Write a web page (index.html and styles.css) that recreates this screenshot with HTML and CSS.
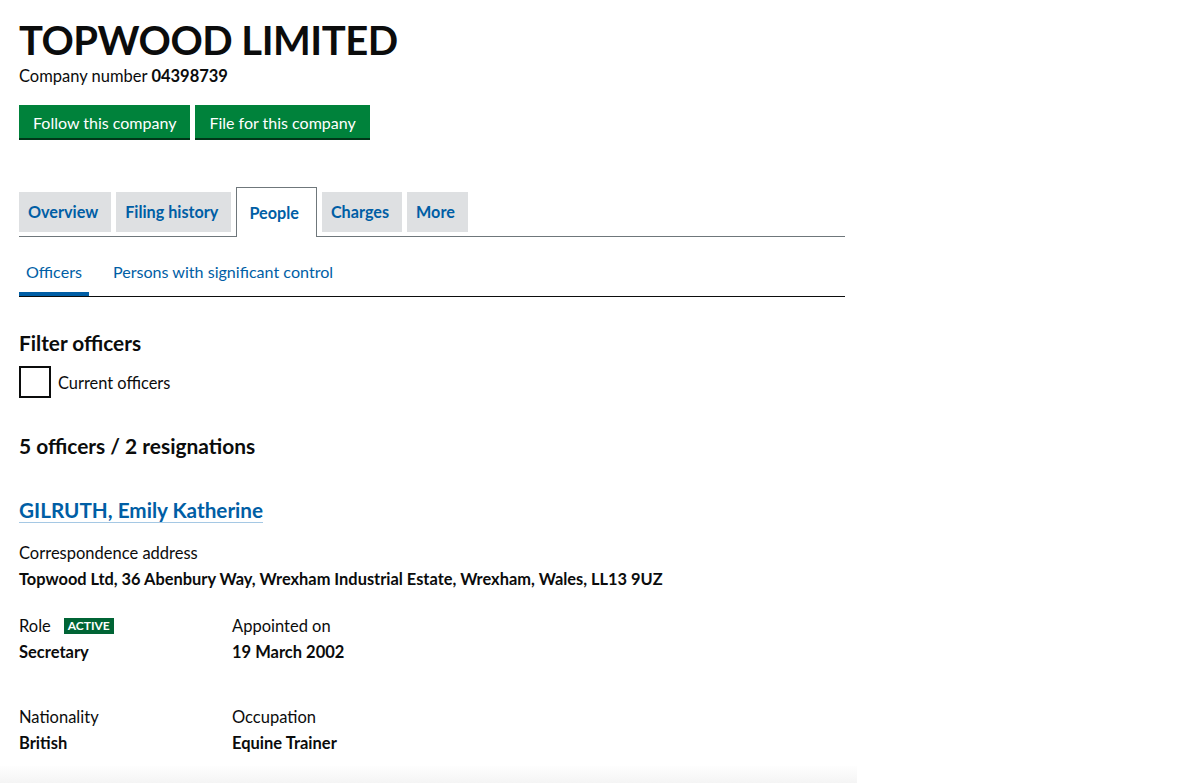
FILE: index.html
```html
<!DOCTYPE html>
<html lang="en">
<head>
<meta charset="utf-8">
<title>TOPWOOD LIMITED - People</title>
<link rel="stylesheet" href="styles.css">
</head>
<body>
<main class="page">
  <h1 class="title">TOPWOOD LIMITED</h1>
  <p class="company-number">Company number <strong>04398739</strong></p>
  <div class="actions">
    <a class="button" href="#">Follow this company</a>
    <a class="button" href="#">File for this company</a>
  </div>

  <nav class="tabs">
    <a class="tab" href="#">Overview</a>
    <a class="tab" href="#">Filing history</a>
    <a class="tab active" href="#">People</a>
    <a class="tab" href="#">Charges</a>
    <a class="tab" href="#">More</a>
  </nav>

  <nav class="subtabs">
    <a class="subtab active" href="#">Officers</a>
    <a class="subtab" href="#">Persons with significant control</a>
  </nav>

  <h2 class="filter-heading">Filter officers</h2>
  <label class="checkbox"><span class="box"></span><span>Current officers</span></label>

  <h2 class="count">5 officers / 2 resignations</h2>

  <section class="officer">
    <h2 class="officer-name"><a href="#">GILRUTH, Emily Katherine</a></h2>
    <div class="field">
      <div class="label">Correspondence address</div>
      <div class="value address">Topwood Ltd, 36 Abenbury Way, Wrexham Industrial Estate, Wrexham, Wales, LL13 9UZ</div>
    </div>
    <div class="row">
      <div class="field col">
        <div class="label">Role <span class="badge">ACTIVE</span></div>
        <div class="value">Secretary</div>
      </div>
      <div class="field col">
        <div class="label">Appointed on</div>
        <div class="value">19 March 2002</div>
      </div>
    </div>
    <div class="row second">
      <div class="field col">
        <div class="label">Nationality</div>
        <div class="value">British</div>
      </div>
      <div class="field col">
        <div class="label">Occupation</div>
        <div class="value">Equine Trainer</div>
      </div>
    </div>
  </section>
  <div class="fade"></div>
</main>
</body>
</html>
```

FILE: styles.css
```css
html, body {
  margin: 0;
  padding: 0;
  background: #fff;
}
body {
  font-family: "Lato", "Liberation Sans", sans-serif;
  color: #0b0c0c;
}
.page {
  width: 826px;
  padding: 0 0 0 19px;
}
.title {
  margin: 0;
  padding-top: 17px;
  font-size: 40px;
  line-height: 46px;
  font-weight: 700;
  letter-spacing: -0.5px;
}
.company-number {
  margin: 2px 0 0;
  font-size: 16.5px;
  line-height: 22px;
}
.company-number strong { font-weight: 700; }
.actions {
  display: flex;
  gap: 5px;
  margin-top: 18px;
}
.button {
  display: block;
  background: #00823b;
  color: #fff;
  text-decoration: none;
  font-size: 16px;
  line-height: 20px;
  padding: 8px 14px 5px;
  border-bottom: 2px solid #003618;
}
.tabs {
  display: flex;
  align-items: flex-end;
  gap: 5px;
  margin-top: 47px;
  border-bottom: 1px solid #6f777b;
  height: 49px;
}
.tab {
  display: block;
  background: #dee0e2;
  color: #005ea5;
  font-weight: 700;
  font-size: 16.2px;
  text-decoration: none;
  line-height: 20px;
  padding: 10px 13px 10px 9px;
  margin-bottom: 4px;
}
.tab.active {
  background: #fff;
  border: 1px solid #6f777b;
  border-bottom: 0;
  padding: 15px 17px 14px 12px;
  margin-bottom: -1px;
}
.subtabs {
  display: flex;
  gap: 17px;
  border-bottom: 1px solid #0b0c0c;
  height: 59px;
  align-items: stretch;
}
.subtab {
  color: #005ea5;
  text-decoration: none;
  font-size: 16.1px;
  padding: 25px 7px 0;
  box-sizing: border-box;
}
.subtab.active {
  border-bottom: 4px solid #005ea5;
}
.filter-heading {
  margin: 33px 0 0;
  font-size: 20.8px;
  line-height: 26px;
  font-weight: 700;
}
.checkbox {
  display: flex;
  align-items: center;
  gap: 7px;
  margin-top: 10px;
  font-size: 16.4px;
}
.box {
  width: 28px;
  height: 28px;
  border: 2px solid #0b0c0c;
  display: block;
}
.count {
  margin: 35px 0 0;
  font-size: 20.9px;
  line-height: 26px;
  font-weight: 700;
}
.officer-name {
  margin: 38px 0 0;
  font-size: 20.7px;
  line-height: 26px;
  font-weight: 700;
}
.officer-name a {
  color: #005ea5;
  text-decoration: none;
  border-bottom: 1px solid #a5c8e4;
}
.field {
  font-size: 16.5px;
  line-height: 26px;
}
.value.address { font-size: 16.4px; }
.officer > .field { margin-top: 17px; }
.label { display: flex; align-items: center; gap: 13px; }
.value { font-weight: 700; }
.row {
  display: flex;
  margin-top: 21px;
}
.row.second { margin-top: 39px; }
.col { width: 213px; }
.badge {
  background: #006435;
  color: #fff;
  font-size: 12px;
  font-weight: 700;
  line-height: 16px;
  padding: 0 4px;
}
.fade {
  margin: 10px 0 0 -19px;
  width: 857px;
  height: 18px;
  background: linear-gradient(#fefefe, #f4f4f4);
}
```
